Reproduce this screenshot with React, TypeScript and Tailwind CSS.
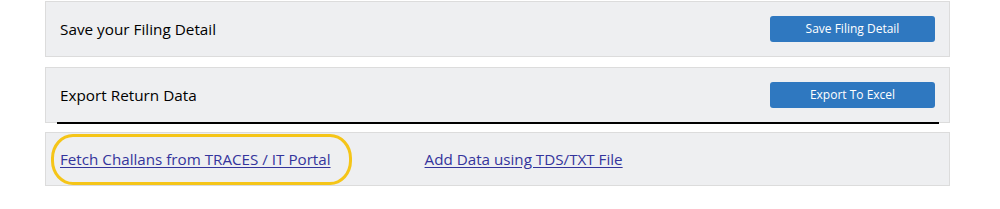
import React from 'react';

const font = { fontFamily: '"Open Sans", "Noto Sans", sans-serif' };

const Panel: React.FC<{ title: string; action: string; rule?: boolean }> = ({ title, action, rule }) => (
  <div className="relative flex h-[56px] items-center justify-between border border-[#dcdcdc] bg-[#eeeff1] pl-[14px] pr-[14px]">
    <span className="text-[15.3px] text-black">{title}</span>
    <button className="h-[26px] w-[165px] rounded-[3px] bg-[#2f78c0] text-[12px] text-white">{action}</button>
    {rule && <div className="absolute left-[11px] right-[10px] -bottom-[2px] border-b-2 border-black" />}
  </div>
);

export default function App() {
  return (
    <div className="h-[209px] w-[1000px] bg-white pl-[45px] pt-px" style={font}>
      <div className="flex w-[905px] flex-col gap-[10px]">
        <Panel title="Save your Filing Detail" action="Save Filing Detail" />
        <Panel title="Export Return Data" action="Export To Excel" rule />
        <div className="relative mt-[-1px] flex h-[54px] items-center gap-[94px] border border-[#dcdcdc] bg-[#eeeff1] pl-[14px]">
          <a href="#" className="text-[15.2px] text-[#34349c] underline underline-offset-2">
            Fetch Challans from TRACES / IT Portal
          </a>
          <a href="#" className="text-[15.2px] text-[#34349c] underline underline-offset-2">
            Add Data using TDS/TXT File
          </a>
          {/* highlight ring */}
          <div className="pointer-events-none absolute left-[5px] top-[1px] h-[51px] w-[301px] rounded-[22px/24px] border-[3px] border-[#f5c518]" />
        </div>
      </div>
    </div>
  );
}
